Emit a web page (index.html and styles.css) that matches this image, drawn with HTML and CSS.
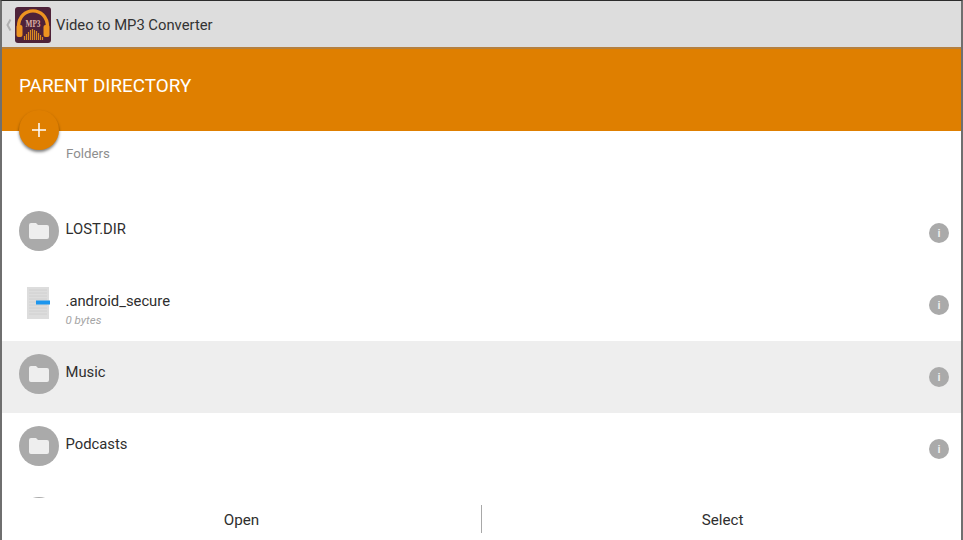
FILE: index.html
```html
<!DOCTYPE html>
<html lang="en">
<head>
<meta charset="utf-8">
<title>Video to MP3 Converter</title>
<link rel="stylesheet" href="styles.css">
</head>
<body>
<div class="frame">
  <header class="actionbar">
    <svg class="back" width="7" height="14" viewBox="0 0 7 14"><path d="M5.5 1.5 2.5 7l3 5.5" fill="none" stroke="#b0b0b0" stroke-width="2"/></svg>
    <svg class="logo" width="36" height="36" viewBox="0 0 36 36">
      <rect width="36" height="36" rx="3" fill="#4e2239"/>
      <path d="M3.5 20C3.500 -1.500 32.500 -1.500 32.500 20" fill="none" stroke="#ee9420" stroke-width="3.4"/>
      <rect x="1.500" y="18" width="6" height="12" rx="2" fill="#ee9420"/>
      <rect x="28.500" y="18" width="6" height="12" rx="2" fill="#ee9420"/>
      <path d="M9.500 33v-4M11.500 33v-6M13.500 33v-8M15.500 33v-10M17.500 33v-11M19.500 33v-10M21.500 33v-9M23.500 33v-7M25.500 33v-5M27.500 33v-3" stroke="#d98a22" stroke-width="1.2"/>
      <text x="18" y="19.500" text-anchor="middle" class="logo-text" textLength="15" lengthAdjust="spacingAndGlyphs">MP3</text>
    </svg>
    <span class="app-title">Video to MP3 Converter</span>
  </header>
  <section class="hero">
    <h1 class="hero-title">PARENT DIRECTORY</h1>
    <button class="fab" type="button">
      <svg width="14" height="14" viewBox="0 0 14 14"><path d="M7 0v14M0 7h14" stroke="#fff" stroke-width="1.5"/></svg>
    </button>
  </section>
  <main class="list">
    <div class="section-label">Folders</div>
    <div class="row">
      <span class="avatar"><svg class="folder" width="20" height="16" viewBox="0 0 20 16"><path d="M2 0h5l2 2h9a2 2 0 0 1 2 2v10a2 2 0 0 1-2 2H2a2 2 0 0 1-2-2V2a2 2 0 0 1 2-2z" fill="#eeeeee"/></svg></span>
      <div class="row-text"><span class="name">LOST.DIR</span></div>
      <span class="info">i</span>
    </div>
    <div class="row file-row">
      <span class="avatar plain">
        <svg class="file-icon" width="24" height="32" viewBox="0 0 24 32">
          <rect x="1" width="22" height="32" fill="#dddddd"/>
          <path d="M3 3h18M3 6h18M3 9h18M3 12h18M3 15h18M3 18h18M3 21h18M3 24h18M3 27h18" stroke="#d0d0d0" stroke-width="1"/>
          <rect x="10" y="13.500" width="14" height="4" fill="#1c96ee"/>
        </svg>
      </span>
      <div class="row-text"><span class="name">.android_secure</span><span class="meta">0 bytes</span></div>
      <span class="info">i</span>
    </div>
    <div class="row selected">
      <span class="avatar"><svg class="folder" width="20" height="16" viewBox="0 0 20 16"><path d="M2 0h5l2 2h9a2 2 0 0 1 2 2v10a2 2 0 0 1-2 2H2a2 2 0 0 1-2-2V2a2 2 0 0 1 2-2z" fill="#eeeeee"/></svg></span>
      <div class="row-text"><span class="name">Music</span></div>
      <span class="info info-low">i</span>
    </div>
    <div class="row">
      <span class="avatar"><svg class="folder" width="20" height="16" viewBox="0 0 20 16"><path d="M2 0h5l2 2h9a2 2 0 0 1 2 2v10a2 2 0 0 1-2 2H2a2 2 0 0 1-2-2V2a2 2 0 0 1 2-2z" fill="#eeeeee"/></svg></span>
      <div class="row-text"><span class="name">Podcasts</span></div>
      <span class="info info-low">i</span>
    </div>
    <div class="row">
      <span class="avatar"></span>
    </div>
  </main>
  <footer class="buttons">
    <button class="btn" type="button">Open</button>
    <button class="btn btn-right" type="button">Select</button>
  </footer>
</div>
</body>
</html>
```
FILE: styles.css
```css
* { box-sizing: border-box; }
html, body { margin: 0; height: 100%; overflow: hidden; }
body { background: #fff; font-family: Roboto, "Liberation Sans", sans-serif; }
.frame {
  width: 963px; height: 540px;
  display: flex; flex-direction: column;
  border-top: 1px solid #2b2b2b;
  border-left: 2px solid #6f6f6f;
  border-right: 2px solid #6f6f6f;
  background: #fff;
}
.actionbar {
  height: 48px; flex: none;
  display: flex; align-items: center;
  background: #dddddd;
  border-bottom: 2px solid #b5803f;
  padding: 1px 0 0 3px;
}
.back { flex: none; }
.logo { flex: none; margin-left: 3px; }
.logo-text { font: bold 11px "Liberation Serif", serif; fill: #dcb0a6; }
.app-title { margin-left: 5px; font-size: 14.8px; color: #333333; }
.hero {
  position: relative;
  height: 82px; flex: none;
  background: #df7f00;
  padding: 26px 0 0 17px;
}
.hero-title { margin: 0; font-size: 18.85px; font-weight: 400; line-height: 22px; color: #fff; }
.fab {
  position: absolute; left: 17px; top: 61px;
  width: 40px; height: 40px; padding: 0; border: 0; border-radius: 50%;
  background: #df7f00;
  box-shadow: 0 2px 3px rgba(0,0,0,.5);
  display: flex; align-items: center; justify-content: center;
  z-index: 2;
}
.list { flex: 1; min-height: 0; overflow: hidden; }
.section-label { height: 67px; padding: 15px 0 0 64px; font-size: 13.3px; line-height: 15px; color: #8e8e8e; }
.row {
  height: 71.5px;
  display: flex; align-items: flex-start;
  padding: 13px 12px 0 17px;
}
.selected { background: #eeeeee; }
.avatar {
  flex: none; width: 40px; height: 40px; border-radius: 50%;
  background: #aaaaaa;
  display: flex; align-items: center; justify-content: center;
}
.folder { display: block; }
.plain { background: none; }
.file-icon { margin-left: -2px; }
.row-text { flex: 1; display: flex; flex-direction: column; margin-left: 6.500px; padding-top: 8px; }
.name { font-size: 14.8px; line-height: 20px; color: #2e2e2e; }
.meta { font-size: 11.500px; font-style: italic; line-height: 12px; margin-top: 3px; color: #a5a5a5; }
.info {
  flex: none; width: 20px; height: 20px; margin-top: 12px; border-radius: 50%;
  background: #aaaaaa; color: #eeeeee;
  font: bold 11px/20px "Liberation Sans", sans-serif; text-align: center;
}
.info-low { margin-top: 13px; }
.buttons { height: 42px; flex: none; display: flex; align-items: flex-start; background: #fff; padding-top: 7px; }
.btn {
  flex: 0 0 479px; height: 28px; border: 0; background: none; padding: 2px 0 0;
  font: 15.200px Roboto, sans-serif; color: #2e2e2e;
}
.btn-right { flex: 1; border-left: 1px solid #a8a8a8; padding-left: 2px; }
```
